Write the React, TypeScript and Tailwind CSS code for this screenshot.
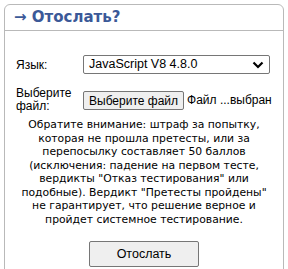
const notice = [
  'Обратите внимание: штраф за попытку,',
  'которая не прошла претесты, или за',
  'перепосылку составляет 50 баллов',
  '(исключения: падение на первом тесте,',
  'вердикты "Отказ тестирования" или',
  'подобные). Вердикт "Претесты пройдены"',
  'не гарантирует, что решение верное и',
  'пройдет системное тестирование.',
];

export default function App() {
  return (
    <div className="h-[269px] w-[288px] overflow-hidden bg-white pl-[4px] pr-[4px] pt-[4px] font-['DejaVu_Sans',Verdana,sans-serif] text-[11px] text-black">
      <div className="h-[300px] rounded-t-[6px] border border-[#b9b9b9] bg-white">
        {/* Header */}
        <div className="flex h-[26px] items-center border-b border-[#b9b9b9] pl-[9px] text-[15px] font-bold text-[#3b5998]">
          → Отослать?
        </div>

        <div className="px-[11px] pt-[24px]">
          {/* Language */}
          <div className="flex items-center">
            <span className="w-[67px] font-['Liberation_Sans',Arial,sans-serif] text-[12px]">Язык:</span>
            <div className="flex h-[19px] w-[187px] items-center justify-between rounded-[2px] border border-[#767676] pl-[5px] pr-[5px] font-['Liberation_Sans',Arial,sans-serif] text-[12.5px]">
              <span>JavaScript V8 4.8.0</span>
              <svg width="12" height="8" viewBox="0 0 12 8">
                <path d="M1.5 1.5 L6 6 L10.5 1.5" fill="none" stroke="#000" strokeWidth="2.2" />
              </svg>
            </div>
          </div>

          {/* File */}
          <div className="mt-[13px] flex items-center">
            <span className="w-[67px] shrink-0 font-['Liberation_Sans',Arial,sans-serif] text-[12px] leading-[13px]">
              Выберите
              <br />
              файл:
            </span>
            <div className="flex items-center whitespace-nowrap font-['Liberation_Sans',Arial,sans-serif]">
              <button className="h-[19px] shrink-0 rounded-[2px] border border-[#767676] bg-[#efefef] px-[5px] text-[12px]">
                Выберите файл
              </button>
              <span className="ml-[3px] text-[12px]">Файл ...выбран</span>
            </div>
          </div>

          {/* Notice */}
          <div className="-mx-[6px] mt-[5px] flex flex-col items-center whitespace-nowrap text-[10.8px] leading-[13.5px]">
            {notice.map((line, i) => (
              <span key={i}>{line}</span>
            ))}
          </div>

          <div className="mt-[15px] flex justify-center">
            <button className="h-[26px] w-[110px] rounded-[2px] border border-[#767676] bg-[#efefef] font-['Liberation_Sans',Arial,sans-serif] text-[12.5px]">
              Отослать
            </button>
          </div>
        </div>
      </div>
    </div>
  );
}
